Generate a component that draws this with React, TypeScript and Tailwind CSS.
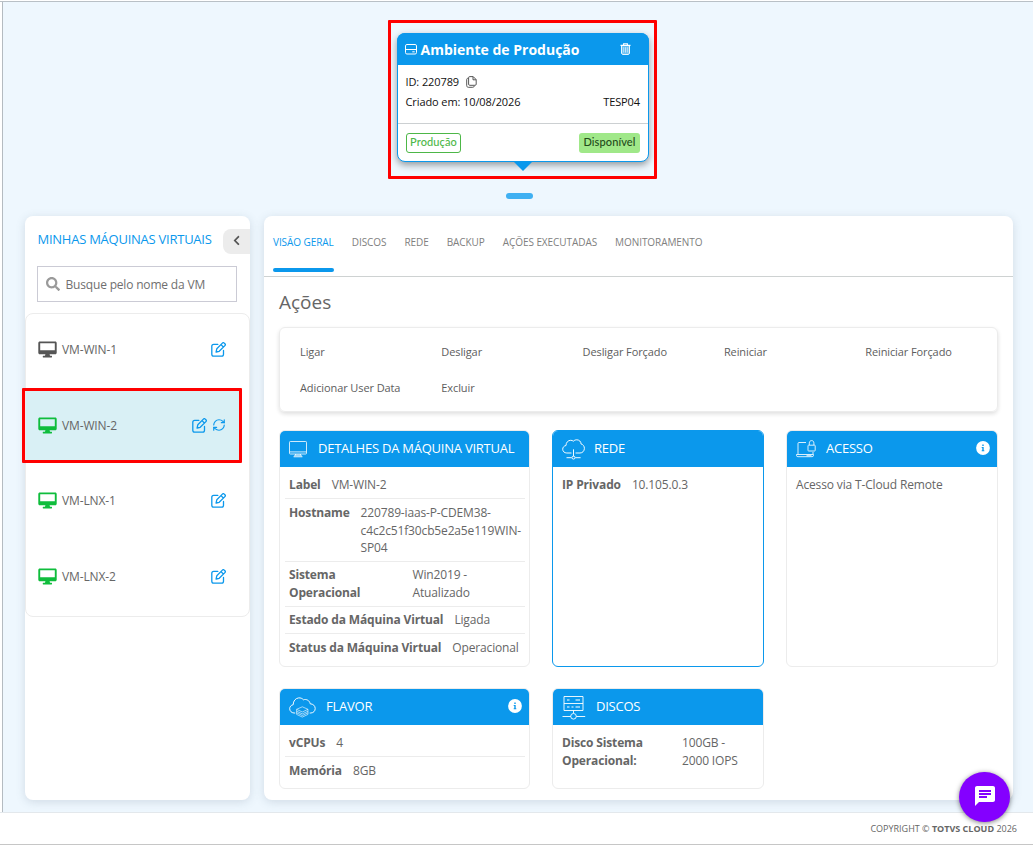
import type { ReactNode } from 'react';
import { FaSearch, FaChevronLeft } from 'react-icons/fa';
import { MdChat } from 'react-icons/md';
import { RefreshCw } from 'lucide-react';

function DriveIcon() {
  return (
    <svg width="12" height="11" viewBox="0 0 12 11" fill="none" stroke="#fff" strokeWidth="1">
      <rect x="0.5" y="0.5" width="11" height="9.5" rx="1.4" />
      <path d="M0.5 5.500h11M7.3 7.800h2.4" />
    </svg>
  );
}

function TrashIcon() {
  return (
    <svg width="11" height="12" viewBox="0 0 11 12" fill="none" stroke="#fff">
      <path d="M0.5 2.4h10M3.6 2.2V0.8h3.8v1.4" strokeWidth="1.1" />
      <path d="M1.6 3v7.1c0 .8.5 1.3 1.2 1.3h5.4c.7 0 1.2-.5 1.2-1.3V3" fill="#fff" fillOpacity="0.35" strokeWidth="1" />
      <path d="M3.7 4.2v5.4M5.5 4.2v5.4M7.3 4.2v5.4" strokeWidth="0.6" />
    </svg>
  );
}

function CopyIcon() {
  return (
    <svg width="11" height="12" viewBox="0 0 11 12" fill="none" stroke="#444" strokeWidth="0.9">
      <path d="M3.7 0.6h3.5l3 3v4.6c0 .7-.4 1.1-1.1 1.1H3.7c-.7 0-1.1-.4-1.1-1.1V1.7c0-.7.4-1.1 1.1-1.1Z" />
      <path d="M7 0.8v3h3" />
      <path d="M2.3 2.2c-1 0-1.6.5-1.6 1.3v6.1c0 1 .7 1.7 1.7 1.7h4.3c.9 0 1.4-.4 1.6-1.2" />
    </svg>
  );
}

function EditIcon() {
  return (
    <svg width="15" height="15" viewBox="0 0 15 15" fill="none" stroke="currentColor" strokeWidth="1.3" strokeLinecap="round" strokeLinejoin="round">
      <path d="M6.800 2.400H2.700C1.600 2.400.8 3.200.8 4.300v7.900c0 1.100.8 1.900 1.900 1.900h7.900c1.100 0 1.900-.8 1.900-1.900V8.500" />
      <path d="M11.400 1.100c.5-.5 1.300-.5 1.800 0l.7.7c.5.5.5 1.300 0 1.800L8.200 9.300l-3.100.7.7-3.200ZM10 2.600l2.400 2.400" />
    </svg>
  );
}

function InfoIcon() {
  return (
    <svg width="14" height="14" viewBox="0 0 14 14" className="mb-0.5">
      <circle cx="7" cy="7" r="6.900" fill="#fff" />
      <path d="M6.300 3.600h1.400v1.300H6.300ZM5.700 6h2v3.200h.6v1H5.700v-1h.6V7h-.6Z" fill="#0b98ec" />
    </svg>
  );
}

function MonitorIcon({ on }: { on: boolean }) {
  return (
    <svg width="19" height="17" viewBox="0 0 19 17" className={on ? 'text-[#0fbd3c]' : 'text-[#555]'} fill="currentColor">
      <path fillRule="evenodd" d="M1.8 0.5h15.4c.9 0 1.5.6 1.5 1.5v9.8c0 .9-.6 1.5-1.500 1.500h-5.600l.4 1.400h1.600c.6 0 .6 1.700 0 1.700H5.200c-.6 0-.6-1.700 0-1.700H7l.4-1.400H1.800c-.9 0-1.500-.6-1.500-1.500V2c0-.9.6-1.500 1.500-1.500ZM2.200 2.300v7h14.600v-7Z" />
    </svg>
  );
}

function ThinMonitor() {
  return (
    <svg width="18" height="17" viewBox="0 0 18 17" fill="none" stroke="#fff" strokeWidth="0.8">
      <rect x="0.5" y="0.5" width="17" height="12.5" rx="0.8" />
      <path d="M0.8 10.9h16.4M6.8 13 5.2 15.6M11.2 13l1.6 2.6M4.6 15.8h8.8" />
      <path d="M6.6 13.2h4.8l1 2.3H5.6Z" fill="#fff" fillOpacity="0.6" stroke="none" />
    </svg>
  );
}

function CloudNetwork() {
  return (
    <svg width="23" height="21" viewBox="0 0 23 21" fill="none" stroke="#fff" strokeWidth="0.95">
      <path d="M9.5 14H4.8C2.3 14 .7 12.3.7 10.2c0-1.9 1.4-3.4 3.3-3.7C4 3.4 6.100 1.300 8.700 1.300c1 0 1.900.3 2.700.9C12.300 1.200 13.500.8 14.800.8c2.400 0 4.200 1.800 4.300 4.200 2 .5 3.300 2.200 3.300 4.300 0 2.700-1.900 4.700-4.400 4.700h-4.500" />
      <path d="M11.500 10.300v7M4.500 18.700h5.200M13.300 18.700h5.300" />
      <circle cx="11.500" cy="18.600" r="1.500" />
    </svg>
  );
}

function LaptopLock() {
  return (
    <svg width="20" height="18" viewBox="0 0 20 18" fill="none" stroke="#fff" strokeWidth="0.85">
      <path d="M10 2.500H3c-.6 0-1 .4-1 1v10.600M17 12v2.100" />
      <path d="M.5 14.500h17v.8c0 .9-.5 1.400-1.400 1.400H1.900c-.9 0-1.400-.5-1.400-1.400ZM10.500 15.700h5" />
      <rect x="12" y="5.200" width="7.200" height="5.800" rx="0.6" />
      <path d="M13.300 5V3.100c0-1.500.9-2.500 2.300-2.500s2.300 1 2.300 2.500V5" />
    </svg>
  );
}

function CloudStack() {
  return (
    <svg width="27" height="21" viewBox="0 0 27 21" fill="none" stroke="#fff" strokeWidth="0.95">
      <path d="M6.200 16H5C2.400 15.800.7 14 .7 11.700c0-2 1.400-3.600 3.500-4C4.200 3.900 6.500 1.300 9.600.9c2-.2 3.700.5 4.800 1.900 3-1.100 6.300.8 6.800 4 3 .1 5 2.100 5 4.700 0 2.500-1.700 4.300-4.300 4.500h-1.200" />
      <g strokeWidth="0.6">
        <path d="m13.300 9.800 5.700 2.500-5.700 2.700-5.700-2.700Z" />
        <path d="m7.600 14.200 5.700 2.700 5.700-2.700M7.600 15.800l5.700 2.700 5.700-2.700M7.600 17.400l5.700 2.700 5.700-2.700M7.600 12.300v5.100M19 12.300v5.100" />
      </g>
    </svg>
  );
}

function ServerDisks() {
  return (
    <svg width="24" height="25" viewBox="0 0 24 25" fill="none" stroke="#fff" strokeWidth="0.9">
      <path d="M2 1.500h19v14H2ZM2 8.500h19" />
      <path d="M5 5h2.500M13.500 5H18M5 12h2.500M9.500 12h2M13.500 12H18" strokeWidth="1.100" />
      <path d="M11.500 15.500v2.700M.5 21.500h8.200M14.300 21.500h8.900" />
      <circle cx="11.500" cy="21.300" r="2.800" />
    </svg>
  );
}

function Panel({
  title,
  icon,
  iconBox,
  info,
  active,
  children,
}: {
  title: string;
  icon: ReactNode;
  iconBox: string;
  info?: boolean;
  active?: boolean;
  children: ReactNode;
}) {
  return (
    <section
      className={
        active
          ? 'flex flex-col overflow-hidden rounded-[6px] border border-[#0b98ec] bg-white'
          : 'flex flex-col overflow-hidden rounded-[6px] border border-[#ececec] bg-white'
      }
    >
      <header className="flex h-9 shrink-0 items-center bg-[#0b98ec] pr-[7px] pl-[9px] text-white">
        <span className={iconBox}>{icon}</span>
        <h2 className="flex-1 pb-0.5 text-[13px] leading-[34px] tracking-[-0.24px] whitespace-nowrap">{title}</h2>
        {info && <InfoIcon />}
      </header>
      <div className="flex flex-col pt-[9px] pr-1 pl-[5px]">{children}</div>
    </section>
  );
}

function Field({ label, children, labelBox, last, h }: { label: string; children: ReactNode; labelBox?: string; last?: boolean; h: string }) {
  return (
    <div className={last ? '' : 'border-b border-[#ececec]'}>
      <dl className={`flex px-1 text-[12px] leading-[17.700px] tracking-[-0.15px] text-[#666] ${h}`}>
        <dt className={`shrink-0 font-bold ${labelBox ?? 'mr-[11px]'}`}>{label}</dt>
        <dd className="whitespace-nowrap">{children}</dd>
      </dl>
    </div>
  );
}

function VmRow({ name, on, selected }: { name: string; on: boolean; selected?: boolean }) {
  return (
    <li className="relative flex h-[75.600px] items-center">
      <div className={selected ? 'flex h-full w-[215px] items-center bg-[#d9f0f5] pt-px pr-[15px] pl-3' : 'flex h-full w-[215px] items-center pr-[15px] pl-3'}>
        <MonitorIcon on={on} />
        <span className="ml-[5px] flex-1 text-[12px] tracking-[-0.14px] text-[#666]">{name}</span>
        <span className="flex gap-[5px] text-[#0b98ec]">
          <EditIcon />
          {selected && <RefreshCw size={14} strokeWidth={2} />}
        </span>
      </div>
      {selected && <div className="absolute top-0 -left-1 h-[75px] w-[220px] rounded-[1px] border-3 border-[#ff0000]" />}
    </li>
  );
}

const tabs = ['VISÃO GERAL', 'DISCOS', 'REDE', 'BACKUP', 'AÇÕES EXECUTADAS', 'MONITORAMENTO'];
const actions = ['Ligar', 'Desligar', 'Desligar Forçado', 'Reiniciar', 'Reiniciar Forçado', 'Adicionar User Data', 'Excluir'];

export default function App() {
  return (
    <div className="relative flex h-[848px] w-[1033px] flex-col overflow-hidden bg-white font-['Open_Sans',sans-serif]">
      <div className="h-[2px] shrink-0 border-b border-[#b9c0c6]" />
      <main className="ml-[2px] flex h-[810px] shrink-0 flex-col border-l border-[#b4bbc1] bg-[#eef7fe]">
        <div className="ml-[385px] flex h-[214px] w-[269px] flex-col items-center pt-[18px]">
          <div className="h-[159px] w-[269px] shrink-0 rounded-[1px] border-3 border-[#ff0000] pt-[10px] pl-[6px]">
            <article className="relative h-[129px] w-[252px] rounded-[8px] border border-[#0b98ec] bg-white shadow-[0_3px_7px_rgba(0,0,0,0.38)]">
              <header className="-mx-px -mt-px flex h-8 items-center rounded-t-[8px] bg-[#0b98ec] pr-[18px] pl-[8px] text-white">
                <DriveIcon />
                <h1 className="ml-[3.500px] flex-1 pt-0.5 text-[14px] leading-[30px] font-bold">Ambiente de Produção</h1>
                <TrashIcon />
              </header>
              <div className="h-[58px] px-2 pt-[7px] text-[11px] leading-5 tracking-[-0.1px] text-[#111]">
                <p className="-ml-[0.500px] flex items-center gap-[7px]">
                  ID: 220789 <CopyIcon />
                </p>
                <p className="-ml-[0.500px] flex justify-between">
                  <span>Criado em: 10/08/2026</span>
                  <span>TESP04</span>
                </p>
              </div>
              <footer className="flex justify-between border-t border-[#ccd0d2] px-2 pt-[9px] font-['Lato',sans-serif] text-[11px] font-medium tracking-[0.1px]">
                <span className="flex h-5 w-[55px] items-center justify-center rounded-[3px] border border-[#4db748] pb-px text-[#4db748]">Produção</span>
                <span className="flex h-5 w-[61px] items-center justify-center rounded-[3px] bg-[#a0e889] pb-px text-[#234a1a]">Disponível</span>
              </footer>
              <svg className="absolute top-[128px] left-[116px]" width="18" height="9" viewBox="0 0 18 9">
                <path d="M0 0h18L9 9Z" fill="#0b98ec" />
              </svg>
            </article>
          </div>
          <div className="mt-[14px] mr-[6px] h-[6px] w-[27px] shrink-0 rounded-full bg-[#3fb0f2]" />
        </div>

        <div className="flex h-[584px] shrink-0 gap-[14px] pl-[22px]">
          <aside className="h-[584px] w-[225px] shrink-0 rounded-[8px] bg-white shadow-[0_2px_10px_rgba(90,110,130,0.2)]">
            <div className="flex h-[50px] items-center justify-between pl-[12.500px]">
              <h2 className="pb-0.5 text-[13px] tracking-[-0.25px] whitespace-nowrap text-[#0b98ec]">MINHAS MÁQUINAS VIRTUAIS</h2>
              <button className="mt-px flex h-[25px] w-[27px] items-center justify-center rounded-l-[8px] bg-[#ececec] pr-px pb-0.5 text-[#555]">
                <FaChevronLeft size={11} />
              </button>
            </div>
            <div className="ml-3 flex h-9 w-[200px] items-center border border-[#cbcbd5] pl-[8px] text-[#9a9a9a]">
              <FaSearch size={14} />
              <span className="mt-0.5 ml-[5.500px] text-[12px] tracking-[-0.18px] text-[#6f6f6f]">Busque pelo nome da VM</span>
            </div>
            <ul className="mt-[11px] h-[304px] w-[225px] rounded-[8px] border border-[#ececec] *:first:-mt-[2px]">
              <VmRow name="VM-WIN-1" on={false} />
              <VmRow name="VM-WIN-2" on selected />
              <VmRow name="VM-LNX-1" on />
              <VmRow name="VM-LNX-2" on />
            </ul>
          </aside>

          <section className="h-[584px] w-[749px] shrink-0 rounded-[8px] bg-white shadow-[0_2px_10px_rgba(90,110,130,0.2)]">
            <nav className="flex h-[61px] gap-[18px] border-b border-[#ced2d2] pl-[9px] text-[10px] tracking-[-0.07px] text-[#808080]">
              {tabs.map((t, i) => (
                <div key={t} className={i === 0 ? 'h-14 text-[#0b98ec]' : 'h-14'}>
                  <div className="h-[52px] leading-[53px] whitespace-nowrap">{t}</div>
                  {i === 0 && <div className="h-1 rounded-[2px] bg-[#0b98ec]" />}
                </div>
              ))}
            </nav>
            <div className="px-[15px]">
              <h2 className="h-[50px] text-[19px] leading-[50px] text-[#666]">Ações</h2>
              <div className="grid h-[85px] w-[719px] grid-cols-[repeat(5,141.300px)] content-start rounded-[6px] border border-[#ececec] pt-[6px] pl-5 text-[11px] leading-9 tracking-[-0.1px] text-[#5d5d5d] shadow-[0_2px_4px_rgba(0,0,0,0.13)]">
                {actions.map((a) => (
                  <div key={a} className="h-9 whitespace-nowrap">{a}</div>
                ))}
              </div>
              <div className="mt-[18px] grid grid-cols-[251px_212px_212px] grid-rows-[237px_101px] gap-x-[22px] gap-y-[21px]">
                <Panel title="DETALHES DA MÁQUINA VIRTUAL" icon={<ThinMonitor />} iconBox="w-[29px]">
                  <Field label="Label" h="h-[22px]">VM-WIN-2</Field>
                  <Field label="Hostname" h="h-[62px] pt-[5px]">
                    220789-iaas-P-CDEM38-
                    <br />
                    c4c2c51f30cb5e2a5e119WIN-
                    <br />
                    SP04
                  </Field>
                  <Field label="Sistema Operacional" labelBox="w-[123.500px] pr-9" h="h-[44px] pt-[4px]">
                    Win2019 -
                    <br />
                    Atualizado
                  </Field>
                  <Field label="Estado da Máquina Virtual" h="h-[26px] pt-[4px]">Ligada</Field>
                  <Field label="Status da Máquina Virtual" last h="h-[26px] pt-[5px]">Operacional</Field>
                </Panel>
                <Panel title="REDE" icon={<CloudNetwork />} iconBox="w-[32px]" active>
                  <Field label="IP Privado" last h="h-[26px]">10.105.0.3</Field>
                </Panel>
                <Panel title="ACESSO" icon={<LaptopLock />} iconBox="w-[30px]" info>
                  <p className="px-1 text-[12px] leading-[17.700px] tracking-[-0.15px] text-[#666]">Acesso via T-Cloud Remote</p>
                </Panel>
                <Panel title="FLAVOR" icon={<CloudStack />} iconBox="w-[37px]" info>
                  <Field label="vCPUs" h="h-[22px]">4</Field>
                  <Field label="Memória" last h="h-[26px] pt-[5px]">8GB</Field>
                </Panel>
                <Panel title="DISCOS" icon={<ServerDisks />} iconBox="w-[34px]">
                  <Field label="Disco Sistema Operacional:" labelBox="w-[120px] pr-7" last h="h-[44px]">
                    100GB -
                    <br />
                    2000 IOPS
                  </Field>
                </Panel>
              </div>
            </div>
          </section>
        </div>
      </main>
      <footer className="h-[33px] shrink-0 border-y border-t-[#e3e8ec] border-b-[#c6c6c6] bg-white pr-4 text-right text-[9px] leading-[32px] text-[#666]">
        COPYRIGHT © <b>TOTVS CLOUD</b> 2026
      </footer>
      <button className="absolute top-[772px] left-[959px] flex h-[50px] w-[51px] items-center justify-center rounded-full bg-[#8400ff] pb-0.5 text-white shadow-[0_1px_5px_rgba(0,0,0,0.5)]">
        <MdChat size={24} />
      </button>
    </div>
  );
}
